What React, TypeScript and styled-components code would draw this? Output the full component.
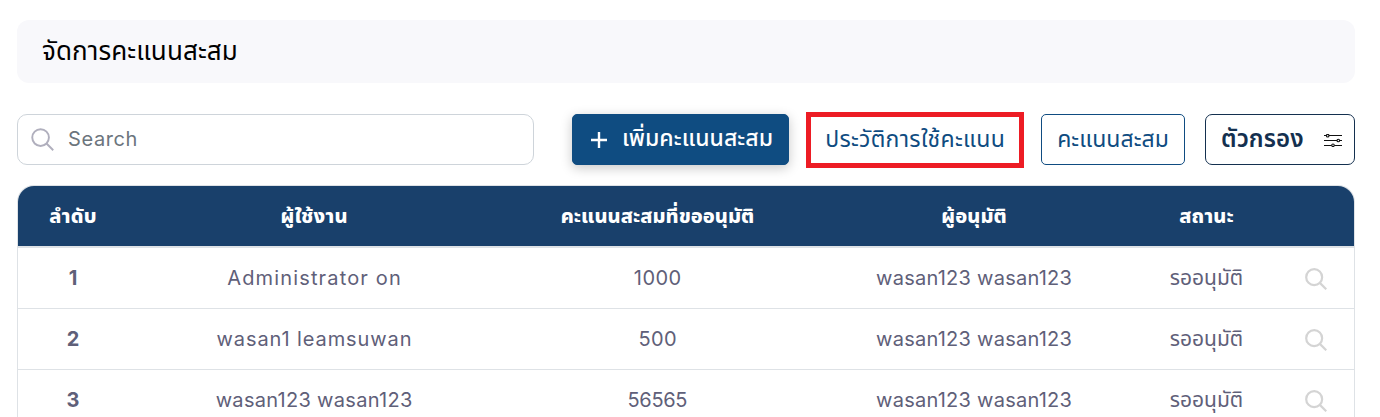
import React from "react";
import styled, { createGlobalStyle } from "styled-components";

const GlobalStyle = createGlobalStyle`
  * { box-sizing: border-box; }
  body {
    margin: 0;
    background: #fff;
    overflow: hidden;
    font-family: Inter, "Noto Sans Thai", "Noto Sans", sans-serif;
    font-size: 20px;
    color: #5f6079;
  }
`;

const Page = styled.main`
  height: 417px;
  overflow: hidden;
  padding: 20px 25px 0 17px;
`;

const Title = styled.h1`
  display: flex;
  align-items: center;
  height: 63px;
  margin: 0 0 31px;
  padding: 0 0 0 25px;
  border-radius: 12px;
  background: #f8f8fb;
  color: #000;
  font-size: 26px;
  font-weight: 400;
`;

const Toolbar = styled.div`
  display: flex;
  align-items: center;
  height: 51px;
  margin-bottom: 20px;
`;

const SearchBox = styled.label`
  display: flex;
  align-items: center;
  width: 517px;
  height: 51px;
  margin-right: 38px;
  padding-left: 13px;
  border: 1px solid #ced4da;
  border-radius: 10px;
`;

const SearchInput = styled.input`
  flex: 1;
  min-width: 0;
  margin-left: 14px;
  padding: 0 0 2px;
  border: 0;
  outline: 0;
  background: none;
  font: inherit;
  letter-spacing: 0.6px;
  &::placeholder { color: #6c757d; opacity: 1; }
`;

const Button = styled.button<{ $w: number; $tone?: "solid" | "plain" | "dark" }>`
  display: flex;
  align-items: center;
  justify-content: center;
  flex: none;
  width: ${(p) => p.$w}px;
  height: 51px;
  padding: 0;
  border: 1px solid ${(p) => (p.$tone === "dark" ? "#14304f" : "#0f4c81")};
  border-radius: ${(p) => (p.$tone === "dark" ? 7 : 5)}px;
  background: ${(p) => (p.$tone === "solid" ? "#0f4c81" : "#fff")};
  box-shadow: ${(p) => (p.$tone === "solid" ? "0 3px 12px rgba(0, 0, 0, 0.22)" : "none")};
  color: ${(p) => (p.$tone === "solid" ? "#fff" : p.$tone === "dark" ? "#14304f" : "#0f4c81")};
  font: inherit;
  font-size: ${(p) => (p.$tone === "dark" ? 24 : 23)}px;
  font-weight: ${(p) => (p.$tone === "dark" ? 600 : p.$tone === "solid" ? 500 : 400)};
  white-space: nowrap;
`;

const AddButton = styled(Button)`
  padding: 0 0 1px 3px;
  svg { margin: 1px 15px 0 0; }
`;

const FilterButton = styled(Button)`
  justify-content: space-between;
  margin-left: 20px;
  padding: 0 12px 0 15px;
  svg { margin-top: 2px; }
`;

const Highlight = styled.div`
  display: flex;
  flex: none;
  height: 56px;
  margin: 0 17px;
  border: 5px solid #ed1c24;
  ${Button} { height: 46px; border: 0; }
`;

const Label = styled.span<{ $ls?: number }>`
  letter-spacing: ${(p) => p.$ls ?? 0}px;
  margin-right: ${(p) => -(p.$ls ?? 0)}px;
`;

const Status = styled.span`
  font-size: 21px;
  line-height: 24px;
`;

const Table = styled.table`
  width: 1338px;
  table-layout: fixed;
  border-collapse: separate;
  border-spacing: 0;
  border: 1px solid #dee2e6;
  border-bottom: 0;
  border-radius: 17px 17px 0 0;
  overflow: hidden;
  text-align: center;
`;

const HeadCell = styled.th`
  height: 62px;
  padding: 1px 0 0;
  border-bottom: 2px solid #dee2e6;
  background: #19406b;
  color: #fff;
  font-size: 20px;
  font-weight: 800;
`;

const Cell = styled.td<{ $bold?: boolean }>`
  height: 61px;
  padding: 0;
  border-bottom: 1px solid #dee2e6;
  font-weight: ${(p) => (p.$bold ? 700 : 400)};
`;

const ActionCell = styled(Cell)`
  padding: 1px 2px 0 0;
  svg { display: block; margin: 0 auto; }
`;

const Magnifier = ({ size, color, weight }: { size: number; color: string; weight: number }) => (
  <svg width={size} height={size} viewBox="0 0 24 24" fill="none" stroke={color} strokeWidth={weight}>
    <circle cx="10" cy="10" r="8.7" />
    <path d="M16.2 16.2 23.2 23.2" />
  </svg>
);

const Sliders = () => (
  <svg width="18" height="13" viewBox="0 0 18 13" fill="#fff" stroke="#111" strokeWidth="1.1">
    <path d="M0 1.5H18M0 6.5H18M0 11.5H18" />
    <circle cx="3.7" cy="1.7" r="1.3" />
    <circle cx="14.3" cy="6.5" r="1.3" />
    <circle cx="9" cy="11.3" r="1.3" />
  </svg>
);

const columns = [
  { title: "ลำดับ", width: 110, ls: 0.3 },
  { title: "ผู้ใช้งาน", width: 372, ls: 0.2 },
  { title: "คะแนนสะสมที่ขออนุมัติ", width: 315, ls: 0.05 },
  { title: "ผู้อนุมัติ", width: 318, ls: 0.1 },
  { title: "สถานะ", width: 147, ls: 0.1 },
  { title: "", width: 74, ls: 0 },
];

const rows = [
  { user: "Administrator on", userLs: 1.15, points: "1000", pointsLs: 0.5 },
  { user: "wasan1 leamsuwan", userLs: 0.9, points: "500", pointsLs: 0.4 },
  { user: "wasan123 wasan123", userLs: 0.3, points: "56565", pointsLs: -0.3 },
];

export default function App() {
  return (
    <Page>
      <GlobalStyle />
      <Title><Label $ls={0.1}>จัดการคะแนนสะสม</Label></Title>
      <Toolbar>
        <SearchBox>
          <Magnifier size={23} color="#b0afbd" weight={2} />
          <SearchInput placeholder="Search" />
        </SearchBox>
        <AddButton $w={217} $tone="solid">
          <svg width="16" height="16" viewBox="0 0 16 16" stroke="#fff" strokeWidth="2.4">
            <path d="M8 0V16M0 8H16" />
          </svg>
          <Label $ls={0.05}>เพิ่มคะแนนสะสม</Label>
        </AddButton>
        <Highlight>
          <Button $w={208}><Label $ls={0.3}>ประวัติการใช้คะแนน</Label></Button>
        </Highlight>
        <Button $w={144}><Label $ls={0.05}>คะแนนสะสม</Label></Button>
        <FilterButton $w={150} $tone="dark">
          <Label $ls={0.1}>ตัวกรอง</Label>
          <Sliders />
        </FilterButton>
      </Toolbar>
      <Table>
        <colgroup>
          {columns.map((c, i) => <col key={i} width={c.width} />)}
        </colgroup>
        <thead>
          <tr>
            {columns.map((c, i) => <HeadCell key={i}><Label $ls={c.ls}>{c.title}</Label></HeadCell>)}
          </tr>
        </thead>
        <tbody>
          {rows.map((r, i) => (
            <tr key={i}>
              <Cell $bold>{i + 1}</Cell>
              <Cell><Label $ls={r.userLs}>{r.user}</Label></Cell>
              <Cell><Label $ls={r.pointsLs}>{r.points}</Label></Cell>
              <Cell><Label $ls={0.25}>wasan123 wasan123</Label></Cell>
              <Cell><Status>รออนุมัติ</Status></Cell>
              <ActionCell><Magnifier size={22} color="#d4d4d4" weight={2.4} /></ActionCell>
            </tr>
          ))}
        </tbody>
      </Table>
    </Page>
  );
}
